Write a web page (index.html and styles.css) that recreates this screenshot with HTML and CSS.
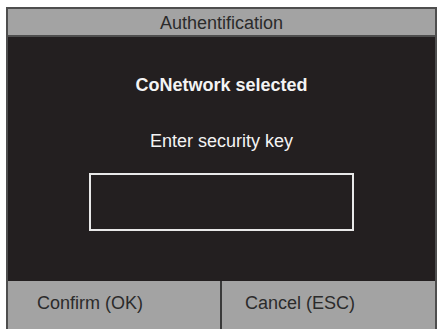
FILE: index.html
```html
<!DOCTYPE html>
<html>
<head>
<meta charset="utf-8">
<link rel="stylesheet" href="styles.css">
</head>
<body>
<div class="frame">
  <div class="title">Authentification</div>
  <div class="main">
    <div class="network">CoNetwork selected</div>
    <div class="prompt">Enter security key</div>
    <div class="keybox"></div>
  </div>
  <div class="buttons">
    <div class="btn btn-left">Confirm (OK)</div>
    <div class="btn btn-right">Cancel (ESC)</div>
  </div>
</div>
</body>
</html>
```
FILE: styles.css
```css
html, body {
  margin: 0;
  padding: 0;
  background: #ffffff;
  font-family: "Liberation Sans", Arial, sans-serif;
  overflow: hidden;
}
.frame {
  margin: 7px 0 0 6px;
  width: 431px;
  height: 322px;
  box-sizing: border-box;
  border: 2px solid #4e4e4e;
  border-bottom: none;
  display: flex;
  flex-direction: column;
  background: #231f20;
}
.title {
  height: 28px;
  box-sizing: border-box;
  background: #a3a3a3;
  color: #2b2b2b;
  font-size: 18px;
  text-align: center;
  line-height: 28px;
  border-bottom: 2px solid #4e4e4e;
}
.main {
  height: 244px;
  display: flex;
  flex-direction: column;
  align-items: center;
  color: #f4f4f4;
  font-size: 18px;
  line-height: 21px;
}
.network {
  font-weight: bold;
  margin-top: 38px;
}
.prompt {
  margin-top: 35px;
}
.keybox {
  margin-top: 21px;
  margin-left: 0;
  width: 265px;
  height: 58px;
  box-sizing: border-box;
  border: 2px solid #e8e8e8;
}
.buttons {
  flex: 1;
  display: flex;
  background: #a3a3a3;
  color: #2b2b2b;
  font-size: 18px;
  line-height: 21px;
}
.btn {
  box-sizing: border-box;
  padding-top: 12px;
}
.btn-left {
  width: 214px;
  padding-left: 29px;
  border-right: 2px solid #3a3a3a;
}
.btn-right {
  flex: 1;
  padding-left: 23px;
}
```
